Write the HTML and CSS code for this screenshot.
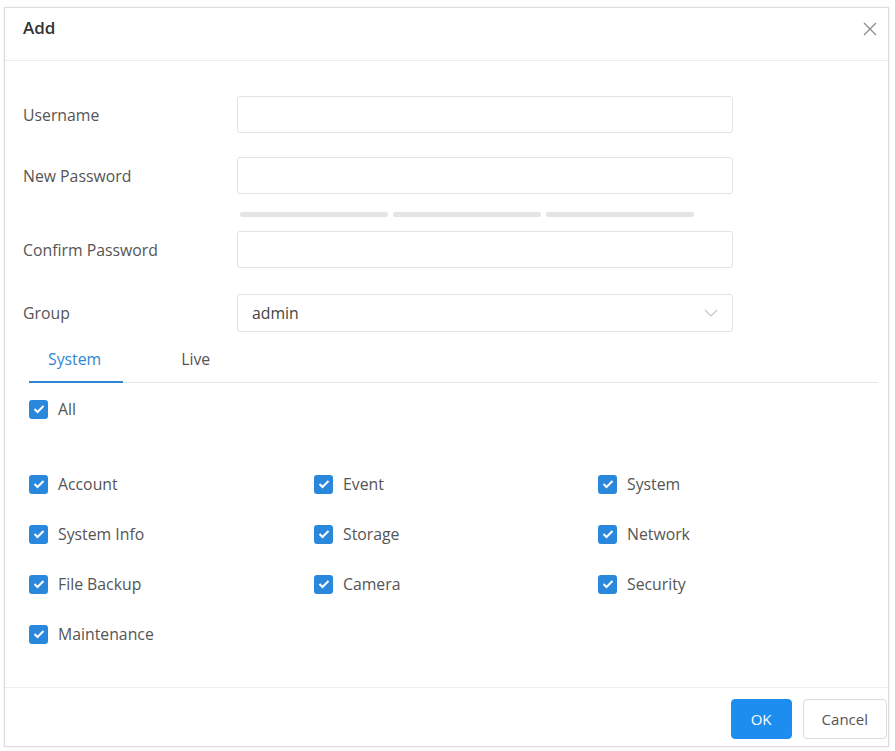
FILE: index.html
```html
<html>
<head>
    <link rel="stylesheet" href="styles.css">
</head>
<body>
    <div class="dialog">
        <div class="dialog-header">
            <span class="title">Add</span>
            <svg class="close" width="16" height="16" viewBox="0 0 16 16">
                <path d="M2 2 L14 14 M14 2 L2 14" stroke="#8c8c8c" stroke-width="1.3" fill="none"/>
            </svg>
        </div>

        <div class="dialog-body">
            <div class="form-row">
                <label class="label">Username</label>
                <div class="input"></div>
            </div>
            <div class="form-row">
                <label class="label">New Password</label>
                <div class="input"></div>
            </div>
            <div class="strength">
                <span class="bar"></span>
                <span class="bar"></span>
                <span class="bar"></span>
            </div>
            <div class="form-row">
                <label class="label">Confirm Password</label>
                <div class="input"></div>
            </div>
            <div class="form-row last">
                <label class="label">Group</label>
                <div class="input select">
                    <span>admin</span>
                    <svg width="14" height="8" viewBox="0 0 14 8">
                        <path d="M1 1 L7 7 L13 1" stroke="#c4c4c4" stroke-width="1.2" fill="none"/>
                    </svg>
                </div>
            </div>

            <div class="tabs">
                <div class="tab active">System</div>
                <div class="tab">Live</div>
            </div>

            <div class="check all">
                <span class="box"><svg width="12" height="10" viewBox="0 0 12 10"><path d="M1.5 5 L4.5 8 L10.5 2" stroke="#fff" stroke-width="2" fill="none"/></svg></span>
                <span>All</span>
            </div>

            <div class="perm-grid">
                <div class="check"><span class="box"><svg width="12" height="10" viewBox="0 0 12 10"><path d="M1.5 5 L4.5 8 L10.5 2" stroke="#fff" stroke-width="2" fill="none"/></svg></span><span>Account</span></div>
                <div class="check"><span class="box"><svg width="12" height="10" viewBox="0 0 12 10"><path d="M1.5 5 L4.5 8 L10.5 2" stroke="#fff" stroke-width="2" fill="none"/></svg></span><span>Event</span></div>
                <div class="check"><span class="box"><svg width="12" height="10" viewBox="0 0 12 10"><path d="M1.5 5 L4.5 8 L10.5 2" stroke="#fff" stroke-width="2" fill="none"/></svg></span><span>System</span></div>
                <div class="check"><span class="box"><svg width="12" height="10" viewBox="0 0 12 10"><path d="M1.5 5 L4.5 8 L10.5 2" stroke="#fff" stroke-width="2" fill="none"/></svg></span><span>System Info</span></div>
                <div class="check"><span class="box"><svg width="12" height="10" viewBox="0 0 12 10"><path d="M1.5 5 L4.5 8 L10.5 2" stroke="#fff" stroke-width="2" fill="none"/></svg></span><span>Storage</span></div>
                <div class="check"><span class="box"><svg width="12" height="10" viewBox="0 0 12 10"><path d="M1.5 5 L4.5 8 L10.5 2" stroke="#fff" stroke-width="2" fill="none"/></svg></span><span>Network</span></div>
                <div class="check"><span class="box"><svg width="12" height="10" viewBox="0 0 12 10"><path d="M1.5 5 L4.5 8 L10.5 2" stroke="#fff" stroke-width="2" fill="none"/></svg></span><span>File Backup</span></div>
                <div class="check"><span class="box"><svg width="12" height="10" viewBox="0 0 12 10"><path d="M1.5 5 L4.5 8 L10.5 2" stroke="#fff" stroke-width="2" fill="none"/></svg></span><span>Camera</span></div>
                <div class="check"><span class="box"><svg width="12" height="10" viewBox="0 0 12 10"><path d="M1.5 5 L4.5 8 L10.5 2" stroke="#fff" stroke-width="2" fill="none"/></svg></span><span>Security</span></div>
                <div class="check"><span class="box"><svg width="12" height="10" viewBox="0 0 12 10"><path d="M1.5 5 L4.5 8 L10.5 2" stroke="#fff" stroke-width="2" fill="none"/></svg></span><span>Maintenance</span></div>
            </div>
        </div>

        <div class="dialog-footer">
            <button class="btn primary">OK</button>
            <button class="btn">Cancel</button>
        </div>
    </div>
</body>
</html>
```

FILE: styles.css
```css
body {
    font-family: "Open Sans", "Noto Sans", sans-serif;
    background-color: #fff;
    margin: 0;
    color: #555;
}
.dialog {
    width: 883px;
    height: 738px;
    margin: 7px 0 0 4px;
    border: 1px solid #dcdcdc;
    box-shadow: 0 0 3px rgba(0, 0, 0, 0.08);
    display: flex;
    flex-direction: column;
    background-color: #fff;
}
.dialog-header {
    height: 52px;
    border-bottom: 1px solid #ececec;
    display: flex;
    align-items: center;
    justify-content: space-between;
    padding: 0 10px 0 18px;
}
.title {
    font-size: 17px;
    font-weight: 600;
    color: #333;
    margin-top: -14px;
}
.close {
    margin-top: -11px;
}
.dialog-body {
    flex: 1;
    padding: 35px 10px 0 18px;
}
.form-row {
    display: flex;
    align-items: center;
    margin-bottom: 24px;
}
.form-row.last {
    margin: 26px 0 0 0;
}
.label {
    width: 214px;
    font-size: 15.8px;
    color: #555;
}
.input {
    width: 494px;
    height: 35px;
    border: 1px solid #e3e3e3;
    border-radius: 3px;
    box-sizing: content-box;
}
.select {
    display: flex;
    align-items: center;
    justify-content: space-between;
    padding: 0 14px 0 14px;
    width: 466px;
    height: 36px;
    font-size: 15.8px;
    color: #444;
}
.strength {
    display: flex;
    gap: 5px;
    margin: -6px 0 14px 217px;
}
.bar {
    width: 148px;
    height: 5px;
    border-radius: 3px;
    background-color: #e4e4e4;
}
.tabs {
    display: flex;
    gap: 39px;
    margin: 4px 0 0 6px;
    border-bottom: 1px solid #e6e6e6;
}
.tab {
    height: 46px;
    line-height: 46px;
    padding: 0 22px 0 19px;
    font-size: 15.8px;
    color: #555;
}
.tab.active {
    color: #2f87d3;
    border-bottom: 2px solid #2f87d3;
    margin-bottom: -1px;
    height: 45px;
}
.check {
    display: flex;
    align-items: center;
    gap: 10px;
    font-size: 15.8px;
    color: #555;
    height: 50px;
}
.check.all {
    margin: 9px 0 0 6px;
    height: 34px;
}
.box {
    width: 19px;
    height: 19px;
    border-radius: 3px;
    background-color: #2a88dc;
    display: flex;
    align-items: center;
    justify-content: center;
}
.perm-grid {
    display: grid;
    grid-template-columns: 285px 284px 1fr;
    margin: 33px 0 0 6px;
}
.dialog-footer {
    height: 58px;
    border-top: 1px solid #ececec;
    display: flex;
    justify-content: flex-end;
    align-items: center;
    gap: 11px;
    padding: 0 1px 0 0;
}
.btn {
    height: 40px;
    padding: 0 18px;
    border: 1px solid #dcdcdc;
    border-radius: 4px;
    background-color: #fff;
    font-family: inherit;
    font-size: 15px;
    color: #555;
    margin-top: 4px;
}
.btn.primary {
    width: 61px;
    background-color: #1d8df0;
    border-color: #1d8df0;
    color: #fff;
}
```
